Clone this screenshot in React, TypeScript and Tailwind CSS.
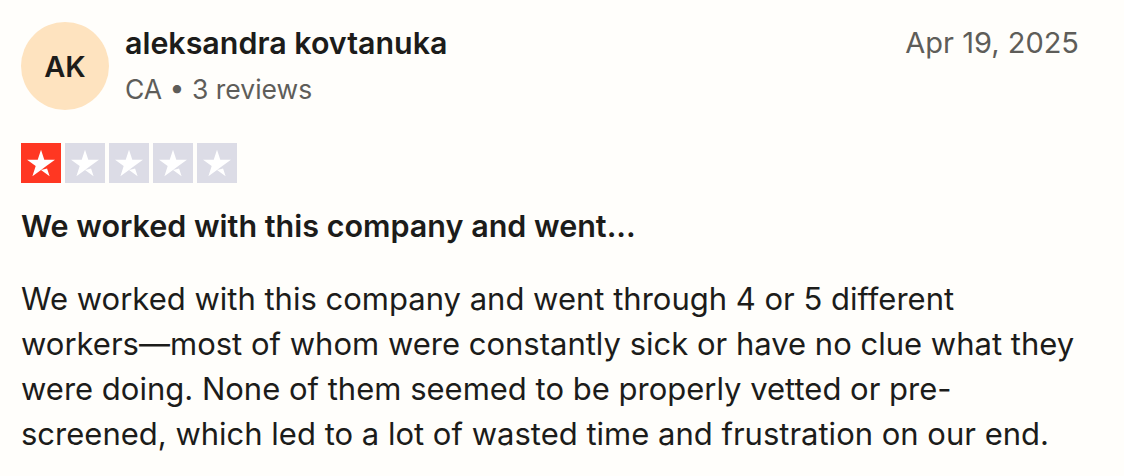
import React from 'react';

const STAR_PATH =
    'M48.03 64.7L62.6 61L68.69 79.78L48.03 64.7ZM81.56 40.44H55.94L48.03 16.26L40.13 40.44H14.51L35.25 55.42L27.34 79.78L48.03 64.7L60.77 55.42L81.56 40.44Z';

function StarRating({ rating }: { rating: number }) {
    return (
        <div className="flex gap-[4px]">
            {[1, 2, 3, 4, 5].map((n) => (
                <div
                    key={n}
                    className={n <= rating ? 'w-[40px] h-[40px] bg-[#ff3722]' : 'w-[40px] h-[40px] bg-[#dcdce6]'}
                >
                    <svg viewBox="0 0 96 96" className="w-full h-full">
                        <path fill="#fff" d={STAR_PATH} />
                    </svg>
                </div>
            ))}
        </div>
    );
}

export default function App() {
    const review = {
        initials: 'AK',
        name: 'aleksandra kovtanuka',
        country: 'CA',
        reviews: 3,
        date: 'Apr 19, 2025',
        rating: 1,
        title: 'We worked with this company and went...',
        body: 'We worked with this company and went through 4 or 5 different workers\u2060—\u2060most of whom were constantly sick or have no clue what they were doing. None of them seemed to be properly vetted or pre-screened, which led to a lot of wasted time and frustration on our end.',
    };

    return (
        <div className="min-h-screen bg-[#fffefb] text-[#1c1c1a] font-['Inter',sans-serif] pl-[21px] pr-[24px] pt-[22px]">
            <header className="flex items-start">
                <div className="w-[88px] h-[88px] rounded-full bg-[#fee3bf] flex items-center justify-center shrink-0">
                    <span className="text-[29px] font-semibold leading-none">{review.initials}</span>
                </div>
                <div className="ml-[16px] pt-[3px] flex-1">
                    <div className="text-[30.4px] leading-[36px] font-semibold">{review.name}</div>
                    <div className="mt-[11px] text-[26.5px] leading-[34px] text-[#5e5d59]">
                        {review.country} • {review.reviews} reviews
                    </div>
                </div>
                <time className="pt-[3px] pr-[21px] text-[29px] leading-[36px] text-[#5e5d59]">{review.date}</time>
            </header>

            <section className="mt-[33px]">
                <StarRating rating={review.rating} />
            </section>

            <h2 className="mt-[24px] text-[30.5px] leading-[38px] font-semibold">{review.title}</h2>

            <p className="mt-[31px] text-[31px] leading-[45px] w-[1075px]">{review.body}</p>
        </div>
    );
}
